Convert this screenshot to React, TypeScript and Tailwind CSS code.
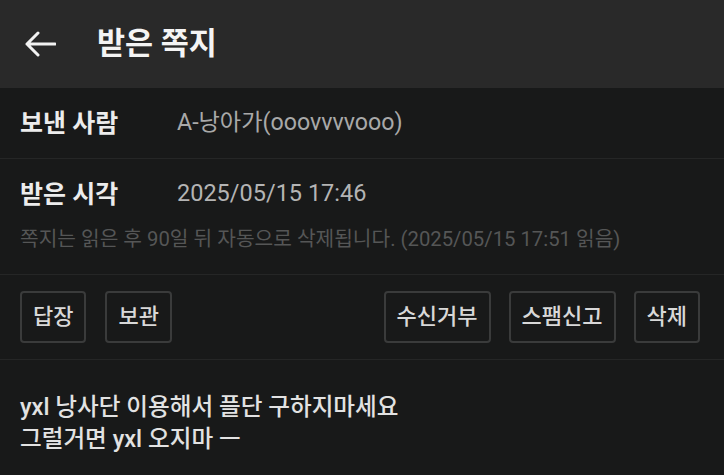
import React from 'react';

const font = { fontFamily: 'Roboto, "Noto Sans CJK KR", sans-serif' };

function ActionButton({ label }: { label: string }) {
  return (
    <button className="h-[52px] px-[11px] rounded-[4px] border-2 border-[#3a3b3b] text-[22px] font-medium text-[#d8d8d8] leading-none">
      {label}
    </button>
  );
}

export default function App() {
  return (
    <div className="w-[724px] h-[475px] bg-[#181919] overflow-hidden" style={font}>
      <header className="h-[88px] bg-[#292929] flex items-center">
        <svg className="ml-[25px]" width="31" height="26" viewBox="0 0 31 26" fill="none">
          <path
            d="M2 13h28M13 2L2 13l11 11"
            stroke="#f2f2f2"
            strokeWidth="3"
            strokeLinecap="round"
            strokeLinejoin="round"
          />
        </svg>
        <h1 className="ml-[41px] text-[30.5px] font-bold text-[#f4f4f4] leading-none">받은 쪽지</h1>
      </header>

      <div className="h-[71px] flex items-center px-5 border-b border-[#252626]">
        <span className="w-[157px] text-[25px] font-bold text-[#ececec] leading-none">보낸 사람</span>
        <span className="text-[23.2px] text-[#a9a9a9] leading-none">A-낭아가(ooovvvvooo)</span>
      </div>

      <div className="h-[116px] px-5 pt-[21px] border-b border-[#252626]">
        <div className="flex items-center h-[28px]">
          <span className="w-[157px] text-[25px] font-bold text-[#ececec] leading-none">받은 시각</span>
          <span className="text-[23.5px] text-[#b4b4b4] leading-none">2025/05/15 17:46</span>
        </div>
        <p className="mt-[19px] text-[20.3px] leading-[24px] text-[#555656] whitespace-nowrap">
          쪽지는 읽은 후 90일 뒤 자동으로 삭제됩니다. (2025/05/15 17:51 읽음)
        </p>
      </div>

      <div className="h-[85px] px-5 flex items-center border-b border-[#252626]">
        <div className="flex gap-[19px]">
          <ActionButton label="답장" />
          <ActionButton label="보관" />
        </div>
        <div className="ml-auto mr-[4px] flex gap-[18px]">
          <ActionButton label="수신거부" />
          <ActionButton label="스팸신고" />
          <ActionButton label="삭제" />
        </div>
      </div>

      <div className="px-5 pt-[31px] text-[23.6px] leading-[32px] font-medium text-[#e2e2e2]">
        <p>yxl 낭사단 이용해서 플단 구하지마세요</p>
        <p>그럴거면 yxl 오지마 ㅡ</p>
      </div>
    </div>
  );
}
